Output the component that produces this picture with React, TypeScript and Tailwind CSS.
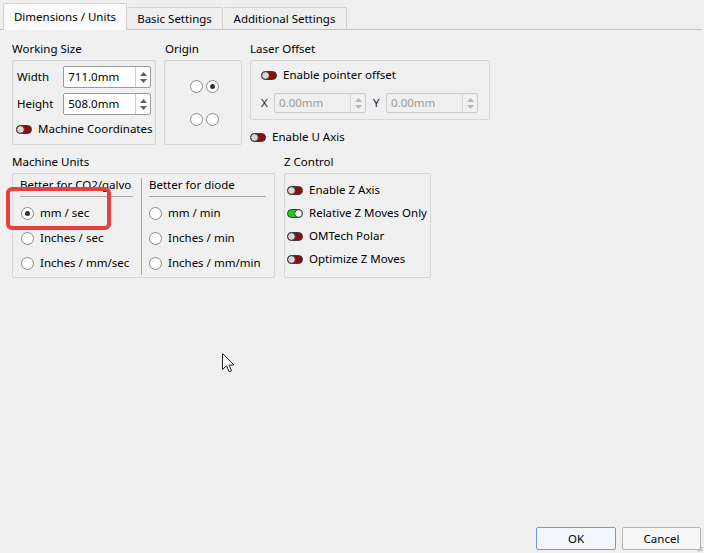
import React from "react";

function Toggle({ on = false }: { on?: boolean }) {
  return (
    <svg width="16" height="9" viewBox="0 0 16 9" className="shrink-0">
      <rect x="0.5" y="0.5" width="15" height="8" rx="4" fill={on ? "#1ccc1c" : "#8e0b0b"} stroke="#3c3c3c" />
      <circle cx={on ? 11.5 : 4.5} cy="4.5" r="3.8" fill={on ? "#f6f6f6" : "#ddd6d6"} stroke="#3c3c3c" strokeWidth="0.9" />
    </svg>
  );
}

function Radio({ checked = false }: { checked?: boolean }) {
  return (
    <span className="w-[13px] h-[13px] shrink-0 rounded-full border border-[#8a8a8a] bg-white flex items-center justify-center">
      {checked && <span className="w-[5px] h-[5px] rounded-full bg-[#333]" />}
    </span>
  );
}

function Arrows({ disabled = false }: { disabled?: boolean }) {
  const c = disabled ? "#b8b8b8" : "#5f5f5f";
  return (
    <div className={`w-[15px] h-full border-l ${disabled ? "border-[#d6d6d6]" : "border-[#cfcfcf]"} flex flex-col items-center justify-center gap-[3px]`}>
      <svg width="7" height="4" viewBox="0 0 7 4"><path d="M0 4 L3.5 0 L7 4 Z" fill={c} /></svg>
      <svg width="7" height="4" viewBox="0 0 7 4"><path d="M0 0 L3.5 4 L7 0 Z" fill={c} /></svg>
    </div>
  );
}

function Spin({ value, disabled = false, w }: { value: string; disabled?: boolean; w: string }) {
  return (
    <div
      className={`${w} flex items-center rounded-[2px] border ${
        disabled ? "h-[20px] border-[#cccccc] bg-[#f0f0f0] text-[#9a9a9a]" : "h-[22px] border-[#9c9c9c] bg-white text-black"
      }`}
    >
      <span className="flex-1 pl-[4px]">{value}</span>
      <Arrows disabled={disabled} />
    </div>
  );
}

function ToggleRow({ label, on = false }: { label: string; on?: boolean }) {
  return (
    <div className="h-[16px] flex items-center gap-[6px]">
      <Toggle on={on} />
      <span>{label}</span>
    </div>
  );
}

function RadioRow({ label, checked = false }: { label: string; checked?: boolean }) {
  return (
    <div className="h-[16px] flex items-center gap-[6px]">
      <Radio checked={checked} />
      <span>{label}</span>
    </div>
  );
}

export default function App() {
  return (
    <div className="relative w-[704px] h-[553px] bg-[#f0f0f0] flex flex-col text-[11.5px] leading-[16px] text-black whitespace-nowrap font-['Segoe_UI','Noto_Sans',sans-serif] overflow-hidden">
      {/* tab bar */}
      <div className="h-[30px] mr-[2px] flex items-end pl-[3px] border-b border-[#c4c4c4]">
        <div className="relative z-10 -mb-px h-[27px] w-[124px] flex items-center justify-center bg-[#fafafa] border border-b-0 border-[#d0d0d0] rounded-t-[2px]">
          Dimensions / Units
        </div>
        <div className="h-[22px] w-[96px] pt-[1px] flex items-center justify-center bg-[#efefef] border border-l-0 border-b-0 border-[#d0d0d0] rounded-t-[2px]">
          Basic Settings
        </div>
        <div className="h-[22px] w-[124px] pt-[1px] flex items-center justify-center bg-[#efefef] border border-l-0 border-b-0 border-[#d0d0d0] rounded-t-[2px]">
          Additional Settings
        </div>
      </div>

      {/* content */}
      <div className="flex-1 pl-[12px] pt-[11px]">
        {/* row 1 */}
        <div className="flex gap-[8px]">
          <div className="w-[144px]">
            <div className="h-[16px] mb-[3px]">Working Size</div>
            <div className="h-[85px] border border-[#d6d6d6] rounded-[2px] px-[4px] pt-[5px]">
              <div className="flex items-center">
                <span className="w-[47px]">Width</span>
                <Spin value="711.0mm" w="w-[89px]" />
              </div>
              <div className="flex items-center mt-[5px]">
                <span className="w-[47px]">Height</span>
                <Spin value="508.0mm" w="w-[89px]" />
              </div>
              <div className="mt-[6px] -ml-[1px]">
                <ToggleRow label="Machine Coordinates" />
              </div>
            </div>
          </div>

          <div className="w-[78px]">
            <div className="h-[16px] mb-[3px] pl-[1px]">Origin</div>
            <div className="h-[85px] border border-[#d6d6d6] rounded-[2px] flex items-center justify-center pl-[3px]">
              <div className="grid grid-cols-2 gap-x-[3px] gap-y-[20px]">
                <Radio />
                <Radio checked />
                <Radio />
                <Radio />
              </div>
            </div>
          </div>

          <div className="w-[240px]">
            <div className="h-[16px] mb-[3px]">Laser Offset</div>
            <div className="h-[60px] border border-[#d6d6d6] rounded-[2px] px-[10px] pt-[6px]">
              <ToggleRow label="Enable pointer offset" />
              <div className="flex items-center mt-[10px] text-[#222]">
                <span className="w-[13px]">X</span>
                <Spin value="0.00mm" disabled w="w-[92px]" />
                <span className="w-[13px] ml-[7px]">Y</span>
                <Spin value="0.00mm" disabled w="w-[92px]" />
              </div>
            </div>
            <div className="mt-[9px]">
              <ToggleRow label="Enable U Axis" />
            </div>
          </div>
        </div>

        {/* row 2 */}
        <div className="flex mt-[9px] gap-[9px]">
          <div className="w-[263px]">
            <div className="h-[16px] mb-[3px]">Machine Units</div>
            <div className="h-[105px] border border-[#d6d6d6] rounded-[2px] flex">
              <div className="w-[128px] pl-[7px] pr-[8px] pt-[3px]">
                <div className="h-[16px]">Better for CO2/galvo</div>
                <div className="h-px bg-[#a8a8a8] mt-[3px]" />
                <div className="mt-[8px] pl-[1px] flex flex-col gap-[9px]">
                  <RadioRow label="mm / sec" checked />
                  <RadioRow label="Inches / sec" />
                  <RadioRow label="Inches / mm/sec" />
                </div>
              </div>
              <div className="w-px bg-[#a8a8a8] mt-[4px] mb-[2px]" />
              <div className="flex-1 pl-[7px] pr-[8px] pt-[3px]">
                <div className="h-[16px]">Better for diode</div>
                <div className="h-px bg-[#a8a8a8] mt-[3px]" />
                <div className="mt-[8px] flex flex-col gap-[9px]">
                  <RadioRow label="mm / min" />
                  <RadioRow label="Inches / min" />
                  <RadioRow label="Inches / mm/min" />
                </div>
              </div>
            </div>
          </div>

          <div className="w-[147px]">
            <div className="h-[16px] mb-[3px]">Z Control</div>
            <div className="h-[105px] border border-[#d6d6d6] rounded-[2px] pl-[2px] pt-[8px] flex flex-col gap-[7px]">
              <ToggleRow label="Enable Z Axis" />
              <ToggleRow label="Relative Z Moves Only" on />
              <ToggleRow label="OMTech Polar" />
              <ToggleRow label="Optimize Z Moves" />
            </div>
          </div>
        </div>
      </div>

      {/* footer */}
      <div className="flex justify-end gap-[6px] pr-[3px] pb-[3px]">
        <button className="w-[80px] h-[23px] rounded-[2px] border border-[#5fa2e6] bg-[#f3f7fb] text-black">OK</button>
        <button className="w-[79px] h-[23px] rounded-[2px] border border-[#b4b4b4] bg-[#f7f7f7] text-black">Cancel</button>
      </div>

      {/* red highlight annotation */}
      <div className="absolute left-[6px] top-[187px] w-[105px] h-[43px] border-[4px] border-[#e8403f] rounded-[6px] pointer-events-none" />

      {/* mouse cursor */}
      <svg className="absolute left-[222px] top-[353px]" width="13" height="20" viewBox="0 0 13 20">
        <path d="M0.5 0.5 L0.5 16.5 L4.5 12.8 L7.2 18.8 L9.6 17.8 L7 12 L12 12 Z" fill="#fff" stroke="#222" strokeWidth="1" strokeLinejoin="miter" />
      </svg>

      {/* resize grip */}
      <svg className="absolute right-[1px] bottom-[1px]" width="6" height="6" viewBox="0 0 6 6">
        <path d="M5.5 1 L1 5.5 M5.5 3.5 L3.5 5.5" stroke="#9a9a9a" strokeWidth="1" />
      </svg>
    </div>
  );
}
